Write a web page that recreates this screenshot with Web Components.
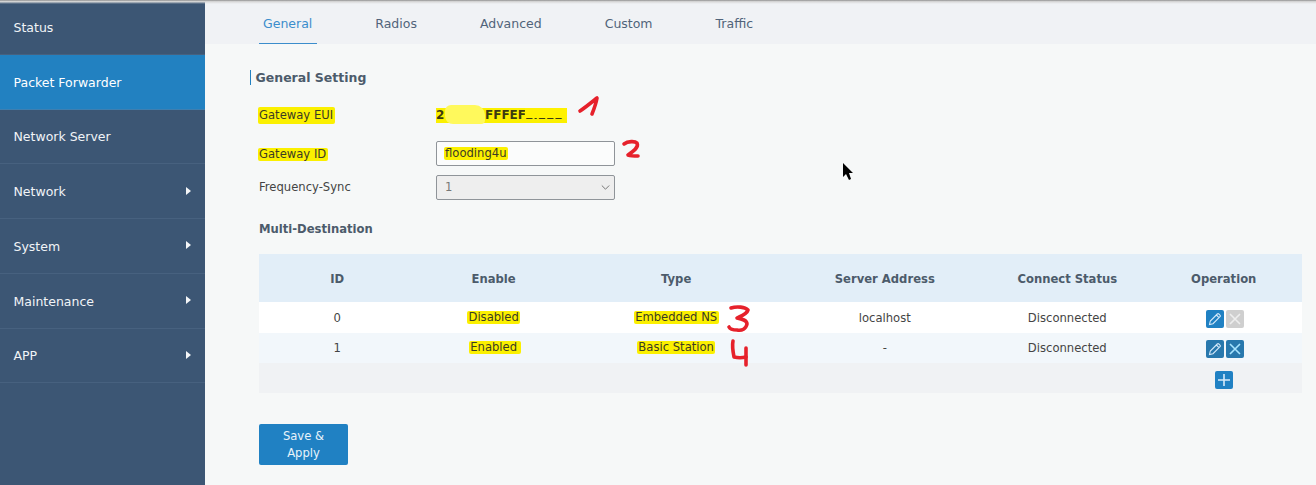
<!DOCTYPE html>
<html lang="en"><head><meta charset="utf-8"><title>Packet Forwarder</title>
<style>
html,body{margin:0;padding:0;height:485px;overflow:hidden;background:#f6f8f8;font:11.6px "DejaVu Sans",sans-serif;color:#3a3f45}
</style></head><body>
<app-shell>
  <side-nav slot="nav">
    <nav-item>Status</nav-item>
    <nav-item active>Packet Forwarder</nav-item>
    <nav-item>Network Server</nav-item>
    <nav-item arrow>Network</nav-item>
    <nav-item arrow>System</nav-item>
    <nav-item arrow>Maintenance</nav-item>
    <nav-item arrow>APP</nav-item>
  </side-nav>
  <tab-bar slot="tabs">
    <tab-item active>General</tab-item>
    <tab-item>Radios</tab-item>
    <tab-item>Advanced</tab-item>
    <tab-item>Custom</tab-item>
    <tab-item>Traffic</tab-item>
  </tab-bar>
  <general-panel></general-panel>
</app-shell>
<script>
function def(name, html, init){
  const t=document.createElement('template');t.innerHTML=html;
  customElements.define(name,class extends HTMLElement{
    constructor(){super();this.attachShadow({mode:'open'}).appendChild(t.content.cloneNode(true));}
    connectedCallback(){if(init&&!this._i){this._i=1;init(this);}}
  });
}
def('app-shell',`<style>
:host{display:flex;position:relative;width:1316px;height:485px;overflow:hidden}
nav{flex:0 0 205px}
main{flex:1;display:flex;flex-direction:column;min-width:0}
.shade{position:absolute;left:0;top:0;right:0;height:4px;background:linear-gradient(#8f8f8f,#d8d8d8 40%,rgba(240,242,245,0));pointer-events:none}
svg{position:absolute;left:0;top:0;pointer-events:none}
</style>
<nav><slot name="nav"></slot></nav>
<main><slot name="tabs"></slot><slot></slot></main>
<div class="shade"></div>
<svg width="1316" height="485" viewBox="0 0 1316 485" fill="none" stroke="#e6212b" stroke-width="3.6" stroke-linecap="round" stroke-linejoin="round">
  <path d="M580 111 C586 107 592 102 597 98 C596 104 594 109 592 114"/>
  <path d="M624 144 C628 141 635 141 637 143 C639 147 634 151 628 155 C631 156 635 156 638 156"/>
  <path d="M731 308 C737 306 745 307 748 310 C747 314 741 316 737 318 C742 319 747 320 747 324 C746 329 742 331 737 330 C733 330 730 329 729 327"/>
  <path d="M733 341 C732 346 733 352 734 357 C738 358 742 358 746 357"/>
  <path d="M746 348 C746 354 746 360 746 365"/>
  <path d="M843 163 L843 177 L846 174 L849 180 L851 179 L849 173 L853 173 Z" fill="#000" stroke="none"/>
</svg>`);
def('side-nav',`<style>:host{display:block;height:485px;background:#3c5674}</style><slot></slot>`);
def('nav-item',`<style>
:host{display:flex;align-items:center;justify-content:space-between;box-sizing:border-box;height:54.75px;padding:1px 14px 0 13.5px;color:#f1f4f7;border-bottom:1px solid #47617f;font-size:12.5px}
:host([active]){background:#2281c1;color:#fff;border-bottom-color:#3f7fb0}
i{display:none;width:0;height:0;border-left:5px solid #f4f6f8;border-top:4.5px solid transparent;border-bottom:4.5px solid transparent;margin-bottom:2px}
:host([arrow]) i{display:block}
</style><slot></slot><i></i>`);
def('tab-bar',`<style>:host{display:flex;box-sizing:border-box;height:44px;padding:0 0 0 54px;background:#f0f2f5;gap:54.5px}</style><slot></slot>`);
def('tab-item',`<style>
:host{display:flex;align-items:center;box-sizing:border-box;height:44px;padding:3px 4.5px 0 4px;color:#51647a;font-size:12.5px;border-bottom:1px solid transparent}
:host([active]){color:#3b8dcc;border-bottom-color:#3b8dcc}
</style><slot></slot>`);
def('mark-text',`<style>:host{display:inline-block;background:#fbf000;color:#3b3b24;padding:0 1.5px;margin:0 -1.5px;line-height:13px;border-radius:2px}
:host([tall]){line-height:17px}
:host([trail]){padding-right:3.5px;margin-right:-3.5px}</style><slot></slot>`);
def('section-title',`<style>
:host{display:block;font-weight:700;font-size:11.6px;color:#4c5b6b;line-height:15px}
:host([bar]){font-size:12.5px;border-left:1px solid #2281c1;padding-left:5px;margin-left:-9.5px}
</style><slot></slot>`);
def('form-row',`<style>
:host{display:flex;align-items:center;height:25px}
.l{flex:0 0 177px;color:#444}
</style><div class="l"><slot name="label"></slot></div><slot></slot>`);
def('eui-value',`<style>
:host{display:block;position:relative;width:131px;height:15px;background:#fbf000;font-weight:700;font-size:12px;line-height:15px;color:#3b3b10;white-space:pre}
.b{position:absolute;background:#fff95c}
.a{left:9px;top:-3px;width:40px;height:19px;border-radius:6px 10px 4px 8px}
.c{left:89px;top:0;width:42px;height:10px;background:#fff200}
span{position:absolute;top:0}
</style><span style="left:0">2</span><span style="left:49px">FFFEF</span><span style="left:89px">E.EEE</span><div class="b a"></div><div class="b c"></div>`);
def('text-field',`<style>
:host{display:block;box-sizing:border-box;width:179px;height:25px;border:1px solid #8f9499;border-radius:2px;background:#fbfcfc;padding:0 8px;line-height:23px;color:#3a3f45}
:host([disabled]){background:#eeeeee;color:#777;position:relative}
svg{position:absolute;right:4px;top:8px}
</style><slot></slot>`,el=>{
  if(el.hasAttribute('disabled')){el.shadowRoot.innerHTML+=`<svg width="9" height="7" viewBox="0 0 9 7"><path d="M.8 1.5 4.5 5.2 8.2 1.5" fill="none" stroke="#777" stroke-width="1"/></svg>`;}
});
def('icon-btn',`<style>
:host{display:inline-flex;align-items:center;justify-content:center;width:18px;height:18px;border-radius:2px;background:#2081c3}
:host([kind=off]){background:#cfcfcf}
:host([kind=dark]){background:#2878ad}
svg{display:block}
</style><svg width="14" height="14" viewBox="0 0 14 14" fill="none"><path/></svg>`,el=>{
  const d={edit:'M1.5 12.5 2.3 9 9.3 2a1 1 0 0 1 1.5 0l1.2 1.2a1 1 0 0 1 0 1.5L5 11.7ZM8.4 3l2.6 2.6',x:'M2 2 12 12M12 2 2 12',add:'M7 1V13M1 7H13'}[el.getAttribute('icon')];
  const p=el.shadowRoot.querySelector('path');p.setAttribute('d',d);
  const k=el.getAttribute('kind');
  p.setAttribute('stroke',k==='off'?'#eeeeee':k==='dark'&&el.getAttribute('icon')==='x'?'#a8e4ff':'#d6eafa');
  p.setAttribute('stroke-width',el.getAttribute('icon')==='edit'?'1.1':'1.6');
});
def('dest-table',`<style>
:host{display:block;width:1043px}
.g{display:grid;grid-template-columns:15% 15% 20% 20% 15% 15%}
.g>div{display:flex;align-items:center;justify-content:center;gap:2px;color:#444}
.h{height:48px;background:#e2eef8}.h>div{font-weight:700;color:#4c5b6b;padding-top:1px}
.r0{height:31px;background:#fff}.r1{height:30px;background:#f2f7fb}.r2{height:30px;background:#f0f2f4}
.r1>div{padding-bottom:1px}
.op{padding-left:2px}
.span{grid-column:6}
icon-btn{margin-top:3px}
</style>
<div class="g h"><div>ID</div><div>Enable</div><div>Type</div><div>Server Address</div><div>Connect Status</div><div>Operation</div></div>
<div class="g r0"><div>0</div><div><mark-text>Disabled</mark-text></div><div><mark-text>Embedded NS</mark-text></div><div>localhost</div><div>Disconnected</div><div class="op"><icon-btn icon="edit"></icon-btn><icon-btn icon="x" kind="off"></icon-btn></div></div>
<div class="g r1"><div>1</div><div><mark-text trail>Enabled</mark-text></div><div><mark-text>Basic Station</mark-text></div><div>-</div><div>Disconnected</div><div class="op"><icon-btn icon="edit" kind="dark"></icon-btn><icon-btn icon="x" kind="dark"></icon-btn></div></div>
<div class="g r2"><div class="span"><icon-btn icon="add"></icon-btn></div></div>`);
def('save-button',`<style>
:host{display:flex;align-items:center;justify-content:center;text-align:center;box-sizing:border-box;width:89px;height:41px;background:#2081c3;color:#e8f3fa;border-radius:2px;line-height:17px;padding:0 16px;margin-top:31px}
</style><slot></slot>`);
def('general-panel',`<style>
:host{display:block;flex:1;padding:26px 0 0 54px}
section-title[bar]{margin-bottom:18px}
form-row{margin-bottom:13px}
form-row.t{margin-bottom:9px}
.md{margin:22px 0 17px}
</style>
<section-title bar>General Setting</section-title>
<form-row><mark-text slot="label" tall>Gateway EUI</mark-text><eui-value></eui-value></form-row>
<form-row class="t"><mark-text slot="label">Gateway ID</mark-text><text-field><mark-text>flooding4u</mark-text></text-field></form-row>
<form-row class="t"><span slot="label" style="display:block;margin-bottom:1px">Frequency-Sync</span><text-field disabled>1</text-field></form-row>
<section-title class="md">Multi-Destination</section-title>
<dest-table></dest-table>
<save-button>Save &amp; Apply</save-button>`);
</script>
</body></html>
